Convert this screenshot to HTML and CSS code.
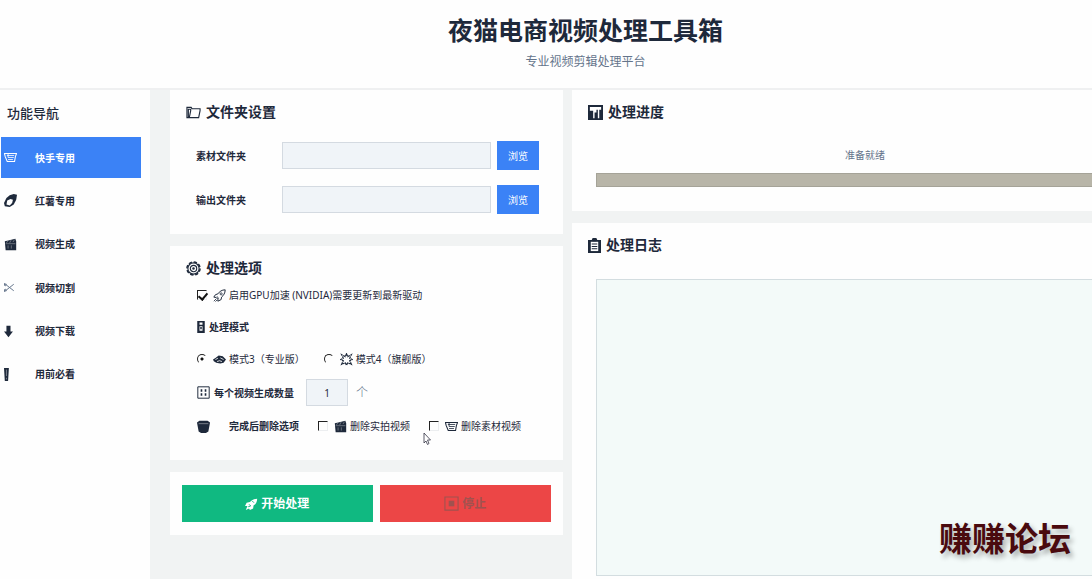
FILE: index.html
```html
<!DOCTYPE html>
<html lang="zh-CN">
<head>
    <meta charset="UTF-8">
    <meta name="viewport" content="width=device-width, initial-scale=1.0">
    <title>夜猫电商视频处理工具箱</title>
    <link rel="stylesheet" href="styles.css">
</head>
<body>
    <!-- shared icons -->
    <svg class="sprite" aria-hidden="true">
        <symbol id="i-basket" viewBox="0 0 16 16">
            <path d="M.5 3h15l-1.500 4-1 6H4L1.500 7z" fill="none" stroke="currentColor" stroke-width="1.300"/>
            <path d="M3.500 5.500h9M5 8h7M5 10.500h6M5 3v5" fill="none" stroke="currentColor"/>
        </symbol>
        <symbol id="i-potato" viewBox="0 0 16 16">
            <path d="M7 1.500L12 0l4 1-1 6-3 6-5 3-6-1-1-4 3-6z" fill="currentColor"/>
            <path d="M4 8l4-2 3 1-1 4-3 3-4-1z" fill="#fff"/>
        </symbol>
        <symbol id="i-clapper" viewBox="0 0 16 16">
            <path d="M1 4l13-3 1 3v11H2z" fill="currentColor"/>
            <path d="M3 6l2-3M7 6l2-4M11 5l2-3M2 7h12M5 9v4M9 9v4" stroke="#fff" stroke-width=".8" opacity=".5"/>
        </symbol>
        <symbol id="i-scissors" viewBox="0 0 16 16">
            <path d="M0 4l3 1 9 7M0 12l3-1 9-7" fill="none" stroke="currentColor" stroke-width="1.2"/>
            <path d="M0 3l3 1-1 2-2-1zM0 13l3-1-1-2-2 1z" fill="none" stroke="currentColor"/>
        </symbol>
        <symbol id="i-down" viewBox="0 0 16 16">
            <path d="M3 1h5v7h3l-5.500 7L0 8h3z" fill="currentColor"/>
        </symbol>
        <symbol id="i-mark" viewBox="0 0 16 16">
            <path d="M0 0h6L5 16H1z" fill="currentColor"/>
            <path d="M3 2v8M3 12v2" stroke="#fff" stroke-width="1" opacity=".5"/>
        </symbol>
        <symbol id="i-folder" viewBox="0 0 16 16">
            <path d="M3 13.500H1V2.500h4.500l1 1.500H15v2l-1.500 7.500H3.500L5 6V4.500H2.500V13" fill="none" stroke="currentColor" stroke-width="1.200"/>
        </symbol>
        <symbol id="i-gear" viewBox="0 0 16 16">
            <circle cx="8" cy="8" r="7" fill="none" stroke="currentColor" stroke-width="1.600" stroke-dasharray="3.600 1.900"/>
            <circle cx="8" cy="8" r="6" fill="none" stroke="currentColor" stroke-width="1.200"/>
            <circle cx="8" cy="8" r="3.400" fill="none" stroke="currentColor" stroke-width="1.200"/>
            <circle cx="8" cy="8" r="1.300" fill="currentColor"/>
        </symbol>
        <symbol id="i-chart" viewBox="0 0 16 16">
            <path d="M0 0h16v16H0z" fill="currentColor"/>
            <path d="M2 2h12v3h-2v9h-1.500V5H9v3H7v6H5.500V6H2z" fill="#fff"/>
        </symbol>
        <symbol id="i-clip" viewBox="0 0 14 16">
            <path d="M0 2h4l1-2h4l1 2h4v14H0z" fill="currentColor"/>
            <path d="M3 4h8v10H3z" fill="#fff"/>
            <path d="M4 6.500h6M4 9h6M4 11.500h6M5 3h4" stroke="currentColor" stroke-width="1.100"/>
        </symbol>
        <symbol id="i-rocket" viewBox="0 0 16 16">
            <path d="M15 1c-4 0-7 2-9 5L3 7 1 10l3 .5 2 2L6 15l4-2 .5-3C13 8 15 5 15 1z" fill="none" stroke="currentColor" stroke-width="1.200"/>
            <circle cx="10" cy="6" r="1.300" fill="none" stroke="currentColor"/>
            <path d="M1 15l3-3M3 15.500l2-2M5 9l2 3" stroke="currentColor"/>
        </symbol>
        <symbol id="i-rocket-solid" viewBox="0 0 16 16">
            <path d="M15 2c-4 0-7 2-9 4L2 7l-2 4 3 0-2 5 4-2 1 2 4-2 .5-3.500C13 9 15 6 15 2z" fill="currentColor"/>
            <path d="M9 5l2 2M5 9l2 2M4 12l3-1" stroke="#10b981" stroke-width="1.200"/>
        </symbol>
        <symbol id="i-switch" viewBox="0 0 10 16">
            <path d="M0 0h10v16H0z" fill="currentColor"/>
            <path d="M3 2h4v3H3zM3 7h4v6H3z" fill="#fff"/>
            <path d="M4 8h2v3H4z" fill="currentColor"/>
        </symbol>
        <symbol id="i-cycle" viewBox="0 0 16 16">
            <path d="M0 8l3-2 4-3 5 1 4 4-3 4-4 1-5-1-3-2z" fill="currentColor"/>
            <path d="M3 8l3-1.500M9 6l4 2M5 10.500l3-1 3 1" fill="none" stroke="#fff"/>
        </symbol>
        <symbol id="i-burst" viewBox="0 0 16 16">
            <path d="M8 1l1.500 3.500L14 2l-2 4.500L15 8l-3 1.500 2 4.500-4.500-2L8 15l-1.500-3L2 14l2-4.500L1 8l3-1.500L2 2l4.500 2.500z" fill="none" stroke="currentColor" stroke-width="1.500" stroke-dasharray="3 .800"/>
        </symbol>
        <symbol id="i-numbers" viewBox="0 0 16 16">
            <path d="M1 1h14v14H1z" fill="none" stroke="currentColor" stroke-width="1.200"/>
            <path d="M5.500 4v3M10.500 4v3M5.500 9v3M10.500 9v3" stroke="currentColor" stroke-width="2"/>
        </symbol>
        <symbol id="i-bin" viewBox="0 0 16 16">
            <path d="M0 3l3-2h10l3 2-2 11-3 2H5l-3-2z" fill="currentColor"/>
            <path d="M2 4.500h12" stroke="#fff" stroke-width=".8" opacity=".6"/>
        </symbol>
        <symbol id="i-stop" viewBox="0 0 16 16">
            <path d="M1 1h14v14H1z" fill="none" stroke="currentColor" stroke-width="1.200"/>
            <path d="M5 5h6v6H5z" fill="currentColor"/>
        </symbol>
    </svg>

    <div class="app">
        <header class="header">
            <h1>夜猫电商视频处理工具箱</h1>
            <p>专业视频剪辑处理平台</p>
        </header>

        <div class="body">
            <nav class="sidebar">
                <h2>功能导航</h2>
                <div class="menu">
                    <button class="active" type="button"><svg class="icon"><use href="#i-basket"/></svg>快手专用</button>
                    <button type="button"><svg class="icon"><use href="#i-potato"/></svg>红薯专用</button>
                    <button type="button"><svg class="icon"><use href="#i-clapper"/></svg>视频生成</button>
                    <button type="button"><svg class="icon thin"><use href="#i-scissors"/></svg>视频切割</button>
                    <button type="button"><svg class="icon"><use href="#i-down"/></svg>视频下载</button>
                    <button type="button"><svg class="icon"><use href="#i-mark"/></svg>用前必看</button>
                </div>
            </nav>

            <main class="main">
                <div class="column">
                    <section class="card">
                        <h2><svg class="icon-title"><use href="#i-folder"/></svg>文件夹设置</h2>
                        <div class="folders">
                            <div class="folder-row">
                                <label for="source">素材文件夹</label>
                                <input type="text" id="source">
                                <button type="button">浏览</button>
                            </div>
                            <div class="folder-row">
                                <label for="output">输出文件夹</label>
                                <input type="text" id="output">
                                <button type="button">浏览</button>
                            </div>
                        </div>
                    </section>

                    <section class="card">
                        <h2><svg class="icon-title"><use href="#i-gear"/></svg>处理选项</h2>
                        <div class="options">
                            <div class="row">
                                <label class="choice"><input type="checkbox" checked><svg class="icon"><use href="#i-rocket"/></svg>启用GPU加速 (NVIDIA)需要更新到最新驱动</label>
                            </div>
                            <h3><svg class="icon-switch"><use href="#i-switch"/></svg>处理模式</h3>
                            <div class="row">
                                <label class="choice"><input type="radio" name="mode" checked><svg class="icon"><use href="#i-cycle"/></svg>模式3（专业版）</label>
                                <label class="choice"><input type="radio" name="mode"><svg class="icon"><use href="#i-burst"/></svg>模式4（旗舰版）</label>
                            </div>
                            <div class="count">
                                <label for="count"><svg class="icon"><use href="#i-numbers"/></svg>每个视频生成数量</label>
                                <input type="text" id="count" value="1">
                                <span>个</span>
                            </div>
                            <div class="row">
                                <svg class="icon"><use href="#i-bin"/></svg>
                                <b>完成后删除选项</b>
                                <label class="choice"><input type="checkbox"><svg class="icon"><use href="#i-clapper"/></svg>删除实拍视频</label>
                                <label class="choice"><input type="checkbox"><svg class="icon"><use href="#i-basket"/></svg>删除素材视频</label>
                            </div>
                        </div>
                    </section>

                    <section class="card actions">
                        <button class="start" type="button"><svg class="icon"><use href="#i-rocket-solid"/></svg>开始处理</button>
                        <button class="stop" type="button" disabled><svg class="icon-title"><use href="#i-stop"/></svg>停止</button>
                    </section>
                </div>

                <div class="column">
                    <section class="card">
                        <h2><svg class="icon-title"><use href="#i-chart"/></svg>处理进度</h2>
                        <div class="status">
                            <label for="progress">准备就绪</label>
                            <progress id="progress" value="0" max="100"></progress>
                        </div>
                    </section>
                    <section class="card log">
                        <h2><svg class="icon-clip"><use href="#i-clip"/></svg><label for="log">处理日志</label></h2>
                        <textarea id="log" readonly></textarea>
                    </section>
                </div>
            </main>
        </div>
    </div>

    <div class="watermark">赚赚论坛</div>
    <svg class="pointer" viewBox="0 0 8 13"><path d="M1 1v10l2-2 1.500 3.500 1.500-1L4.500 8H7.500z" fill="#fff" stroke="#334" stroke-width=".8"/></svg>
</body>
</html>
```
FILE: styles.css
```css
* {
    box-sizing: border-box;
}

body {
    position: relative;
    margin: 0;
    height: 100vh;
    overflow: hidden;
    font-family: "Noto Sans", "Noto Sans CJK SC", sans-serif;
    font-size: 10px;
    line-height: 20px;
    color: #1e293b;
    background: #f1f3f3;
}

h1, h2, h3, p {
    margin: 0;
}

button, input, textarea {
    font: inherit;
    color: inherit;
    border: none;
    border-radius: 0;
}

button {
    padding: 0;
    cursor: pointer;
}

.sprite {
    display: none;
}

.icon {
    flex: none;
    width: 13px;
    height: 13px;
}

.icon-title {
    flex: none;
    width: 15px;
    height: 15px;
}

.icon-clip {
    width: 13px;
    height: 15px;
}

.icon-switch {
    width: 8px;
    height: 12px;
}

/* the window is a little wider than the screen */
.app {
    display: flex;
    flex-direction: column;
    width: calc(100% + 79px);
    height: 100%;
}

.header {
    padding: 12px 0 16px;
    text-align: center;
    background: #fefefe;
    border-bottom: 2px solid #eff0f1;
}

.header h1 {
    font-size: 25px;
    line-height: 36px;
}

.header p {
    padding-top: 4px;
    font-size: 12px;
    color: #64748b;
}

.body {
    display: flex;
    flex: 1;
    min-height: 0;
}

.sidebar {
    width: 150px;
    padding: 13px 9px 0 1px;
    background: #fefefe;
}

.sidebar h2 {
    padding-left: 6px;
    font-family: "Noto Sans CJK SC", sans-serif;
    font-size: 13px;
    font-weight: 500;
}

.menu {
    display: flex;
    flex-direction: column;
    justify-content: space-between;
    height: 258px;
    margin-top: 14px;
}

.menu button {
    display: flex;
    align-items: center;
    gap: 18px;
    height: 41px;
    padding-left: 3px;
    font-weight: bold;
    background: none;
}

.menu .active {
    color: #fff;
    background: #3b82f6;
}

.thin {
    color: #64748b;
}

.main {
    display: grid;
    flex: 1;
    grid-template-columns: 393px 1fr;
    gap: 9px;
    padding: 0 13px 0 20px;
}

.column {
    display: flex;
    flex-direction: column;
    gap: 12px;
}

.card {
    padding: 12px 24px 24px 16px;
    background: #fefefe;
}

.card h2 {
    display: flex;
    align-items: center;
    gap: 5px;
    font-size: 14px;
}

.folders {
    display: grid;
    gap: 15px;
    margin: 19px 0 -4px 10px;
}

.folder-row {
    display: grid;
    grid-template-columns: 80px 1fr 42px;
    align-items: center;
    gap: 6px;
}

.folder-row label {
    font-weight: bold;
}

.folder-row input,
.count input {
    width: 100%;
    height: 27px;
    background: #f0f4f8;
    border: 1px solid #d4dae1;
}

.folder-row button {
    height: 29px;
    color: #fff;
    background: #3b82f6;
}

.options {
    display: grid;
    gap: 10px;
    margin: 7px 0 0 11px;
}

.options h3 {
    display: flex;
    align-items: center;
    gap: 4px;
    height: 24px;
    font-size: 10px;
}

.row {
    display: flex;
    align-items: center;
    gap: 19px;
    white-space: nowrap;
}

.choice {
    display: flex;
    align-items: center;
    gap: 3px;
}

.choice input {
    appearance: none;
    width: 10px;
    height: 10px;
    margin: 0 3px 0 0;
    border: 1px solid #eceef0;
    border-top-color: #222;
    border-left-color: #222;
}

.choice input[type="radio"] {
    border-color: #222 transparent transparent #222;
    border-radius: 50%;
}

.choice input[type="radio"]:checked {
    background: radial-gradient(circle, #111 0 1px, transparent 2px);
}

/* tick drawn from two borders of a rotated box */
.choice input[type="checkbox"]:checked::before {
    content: "";
    display: block;
    width: 4px;
    height: 7px;
    margin: 0 0 0 2px;
    border: solid #111;
    border-width: 0 2px 2px 0;
    transform: rotate(40deg);
}

.count {
    display: flex;
    align-items: center;
    gap: 12px;
}

.count label {
    display: flex;
    align-items: center;
    gap: 4px;
    font-weight: bold;
}

.count input {
    width: 42px;
    text-align: center;
}

.count span {
    margin-left: -4px;
    font-size: 12px;
    font-weight: 300;
    color: #64748b;
}

.actions {
    display: grid;
    grid-template-columns: 10fr 9fr;
    gap: 7px;
    padding: 13px 12px;
}

.actions button {
    display: flex;
    align-items: center;
    justify-content: center;
    gap: 3px;
    height: 37px;
    font-size: 12px;
    font-weight: bold;
}

.start {
    color: #fff;
    background: #10b981;
}

.stop {
    color: #a0524f;
    background: #ec4646;
}

.status {
    display: flex;
    flex-direction: column;
    gap: 8px;
    margin: 23px 0 0 8px;
    text-align: center;
    color: #64748b;
}

progress {
    appearance: none;
    width: 100%;
    height: 14px;
    border: 1px solid #a5a398;
    background: #b8b5a8;
}

progress::-webkit-progress-bar {
    background: #b8b5a8;
}

.log {
    display: flex;
    flex: 1;
    flex-direction: column;
    padding-bottom: 3px;
}

.log textarea {
    flex: 1;
    margin: 24px 0 0 8px;
    resize: none;
    background: #f3faf9;
    border: 1px solid #d3dde0;
}

.watermark {
    position: absolute;
    right: 21px;
    bottom: 16px;
    font-size: 33px;
    line-height: 48px;
    font-weight: bold;
    color: #4a0a0e;
    text-shadow: 3px 4px 5px rgba(0, 0, 0, 0.3);
}

.pointer {
    position: absolute;
    left: 423px;
    top: 432px;
    width: 8px;
    height: 13px;
}
```
